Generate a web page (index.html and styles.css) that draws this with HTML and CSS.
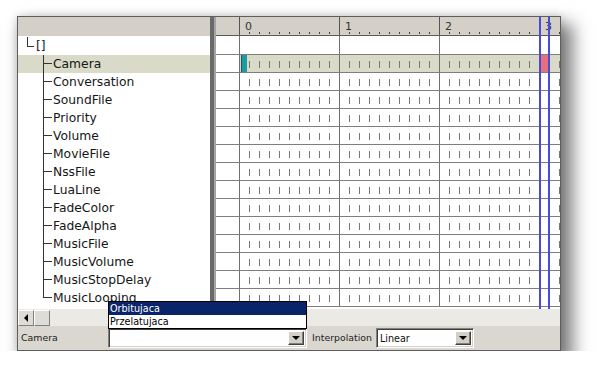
FILE: index.html
```html
<!DOCTYPE html>
<html>
<head>
<meta charset="utf-8">
<title>Timeline</title>
<link rel="stylesheet" href="styles.css">
</head>
<body>
<div class="window">
  <div class="main">
    <div class="tree">
      <div class="tree-head"></div>
      <div class="node root"><span>[]</span></div>
      <div class="node child sel"><span>Camera</span></div>
      <div class="node child"><span>Conversation</span></div>
      <div class="node child"><span>SoundFile</span></div>
      <div class="node child"><span>Priority</span></div>
      <div class="node child"><span>Volume</span></div>
      <div class="node child"><span>MovieFile</span></div>
      <div class="node child"><span>NssFile</span></div>
      <div class="node child"><span>LuaLine</span></div>
      <div class="node child"><span>FadeColor</span></div>
      <div class="node child"><span>FadeAlpha</span></div>
      <div class="node child"><span>MusicFile</span></div>
      <div class="node child"><span>MusicVolume</span></div>
      <div class="node child"><span>MusicStopDelay</span></div>
      <div class="node child last"><span>MusicLooping</span></div>
    </div>
    <div class="splitter"></div>
    <div class="timeline">
      <div class="tl-row tl-head">
        <div class="gutter"></div>
        <div class="sec"><span class="num">0</span></div>
        <div class="sec"><span class="num">1</span></div>
        <div class="sec"><span class="num">2</span></div>
        <div class="sec last"><span class="num">3</span></div>
      </div>
      <div class="tl-row first">
        <div class="gutter"></div><div class="sec"></div><div class="sec"></div><div class="sec"></div><div class="sec last"></div>
      </div>
      <div class="tl-row ticks sel">
        <div class="gutter"></div>
        <div class="sec"><i class="key teal"></i></div>
        <div class="sec"></div><div class="sec"></div>
        <div class="sec last"><i class="key pink"></i></div>
      </div>
      <div class="tl-row ticks"><div class="gutter"></div><div class="sec"></div><div class="sec"></div><div class="sec"></div><div class="sec last"></div></div>
      <div class="tl-row ticks"><div class="gutter"></div><div class="sec"></div><div class="sec"></div><div class="sec"></div><div class="sec last"></div></div>
      <div class="tl-row ticks"><div class="gutter"></div><div class="sec"></div><div class="sec"></div><div class="sec"></div><div class="sec last"></div></div>
      <div class="tl-row ticks"><div class="gutter"></div><div class="sec"></div><div class="sec"></div><div class="sec"></div><div class="sec last"></div></div>
      <div class="tl-row ticks"><div class="gutter"></div><div class="sec"></div><div class="sec"></div><div class="sec"></div><div class="sec last"></div></div>
      <div class="tl-row ticks"><div class="gutter"></div><div class="sec"></div><div class="sec"></div><div class="sec"></div><div class="sec last"></div></div>
      <div class="tl-row ticks"><div class="gutter"></div><div class="sec"></div><div class="sec"></div><div class="sec"></div><div class="sec last"></div></div>
      <div class="tl-row ticks"><div class="gutter"></div><div class="sec"></div><div class="sec"></div><div class="sec"></div><div class="sec last"></div></div>
      <div class="tl-row ticks"><div class="gutter"></div><div class="sec"></div><div class="sec"></div><div class="sec"></div><div class="sec last"></div></div>
      <div class="tl-row ticks"><div class="gutter"></div><div class="sec"></div><div class="sec"></div><div class="sec"></div><div class="sec last"></div></div>
      <div class="tl-row ticks"><div class="gutter"></div><div class="sec"></div><div class="sec"></div><div class="sec"></div><div class="sec last"></div></div>
      <div class="tl-row ticks"><div class="gutter"></div><div class="sec"></div><div class="sec"></div><div class="sec"></div><div class="sec last"></div></div>
      <div class="tl-row ticks"><div class="gutter"></div><div class="sec"></div><div class="sec"></div><div class="sec"></div><div class="sec last"></div></div>
      <div class="cursor c1"></div>
      <div class="cursor c2"></div>
    </div>
  </div>
  <div class="hscroll">
    <div class="sbtn"><i class="arrow-left"></i></div>
    <div class="sbtn thumb"></div>
  </div>
  <div class="footer">
    <div class="flabel">Camera</div>
    <div class="combo wide"><span class="ctext"></span><span class="cbtn"><i class="arrow-down"></i></span></div>
    <div class="flabel2">Interpolation</div>
    <div class="combo narrow"><span class="ctext">Linear</span><span class="cbtn"><i class="arrow-down"></i></span></div>
  </div>
  <div class="popup">
    <div class="item hl">Orbitujaca</div>
    <div class="item">Przelatujaca</div>
  </div>
</div>
</body>
</html>
```
FILE: styles.css
```css
* { box-sizing: border-box; margin: 0; padding: 0; }
html, body { background: #fff; }
body {
  padding: 16px 0 0 17px;
  font-family: "DejaVu Sans", Verdana, sans-serif;
  color: #1a1a1a;
}
.window {
  position: relative;
  width: 544px;
  height: 335px;
  border: 1px solid #5e5e5e;
  background: #fff;
  display: flex;
  flex-direction: column;
  box-shadow: 9px 11px 16px 3px rgba(0,0,0,.5), 0 0 8px rgba(0,0,0,.16);
}
.main { display: flex; height: 292px; overflow: hidden; background: #fff; }

/* tree */
.tree { width: 192px; flex: none; overflow: hidden; }
.tree-head { height: 19px; background: #d4d0c8; }
.node {
  position: relative;
  height: 18px;
  font-size: 12.3px;
  line-height: 18px;
  white-space: nowrap;
  padding-left: 35px;
  color: #161616;
}
.node.root { height: 19px; padding-left: 18px; }
.node.root::before {
  content: ""; position: absolute; left: 9px; top: 1px;
  width: 6px; height: 9px;
  border-left: 1px solid #333; border-bottom: 1px solid #333;
}
.node.child::before {
  content: ""; position: absolute; left: 25px; top: 0; bottom: 0;
  border-left: 1px solid #333;
}
.node.child.last::before { bottom: auto; height: 9px; }
.node.child::after {
  content: ""; position: absolute; left: 25px; top: 8px;
  width: 9px; border-top: 1px solid #333;
}
.node.sel { background: #d9dac8; }

.splitter {
  width: 6px; flex: none;
  background: #6a6a6a;
  border-right: 2px solid #a4a4a4;
}

/* timeline */
.timeline { position: relative; flex: 1; overflow: hidden; }
.tl-row { display: flex; height: 18px; border-bottom: 1px solid #7e7e7e; }
.tl-row.first { height: 19px; }
.tl-head { height: 19px; background: #d4d0c8; border-bottom-color: #5a5a5a; }
.gutter { width: 23px; flex: none; }
.sec {
  position: relative;
  width: 100px; flex: none;
  border-left: 1px solid #707070;
}
.sec.last { flex: 1; width: auto; }
.tl-head .sec {
  border-left-color: #555;
  background: repeating-linear-gradient(to right, transparent 0 9px, #444 9px 10px) 0 15px / 100% 2px no-repeat;
}
.num { display: block; padding-left: 5px; font-size: 11px; line-height: 19px; color: #333; }
.ticks .sec {
  background: repeating-linear-gradient(to right, transparent 0 9px, #777 9px 10px) 0 6px / 100% 7px no-repeat;
}
.ticks.sel .sec { background-color: #d9dac8; }
.key { position: absolute; top: 0; bottom: 0; }
.key.teal { left: 1px; width: 6px; background: #1f9aa3; border-left: 1px solid #0d5d66; }
.key.pink { left: 0; width: 8px; background: #e8707c; }
.cursor { position: absolute; top: 0; bottom: 0; width: 2px; background: #4a4ad8; }
.cursor.c1 { left: 323px; }
.cursor.c2 { left: 332px; }

/* scroll strip */
.hscroll { height: 17px; background: #ebeae5; display: flex; align-items: flex-end; }
.sbtn {
  width: 16px; height: 16px;
  background: #dedcd6;
  border: 1px solid; border-color: #fff #808080 #808080 #fff;
  display: flex; align-items: center; justify-content: center;
}
.arrow-left {
  width: 0; height: 0;
  border-top: 4px solid transparent; border-bottom: 4px solid transparent;
  border-right: 4px solid #000;
}

/* footer */
.footer {
  height: 24px;
  background: #dad7d0;
  display: flex;
  align-items: flex-start;
  padding-top: 1px;
  font-size: 9.4px;
  color: #222;
}
.flabel { width: 90px; padding-left: 3px; line-height: 21px; }
.flabel2 { margin-left: 5px; line-height: 21px; }
.combo {
  height: 20px;
  margin-top: 1px;
  background: #fff;
  border: 1px solid; border-color: #808080 #fff #fff #808080;
  box-shadow: inset 1px 1px #404040, inset -1px -1px #d4d0c8;
  display: flex; align-items: stretch;
  padding: 2px;
}
.combo.wide { width: 199px; }
.combo.narrow { width: 98px; margin-left: 4px; }
.ctext { flex: 1; font-size: 9.6px; line-height: 16px; padding-left: 1px; color: #111; }
.cbtn {
  width: 16px; flex: none;
  background: #d4d0c8;
  border: 1px solid; border-color: #fff #404040 #404040 #fff;
  box-shadow: inset -1px -1px #808080;
  display: flex; align-items: center; justify-content: center;
}
.arrow-down {
  width: 0; height: 0;
  border-left: 4px solid transparent; border-right: 4px solid transparent;
  border-top: 4px solid #000;
}

/* dropdown list */
.popup {
  position: absolute;
  left: 90px; top: 284px;
  width: 199px; height: 28px;
  border: 1px solid #000;
  background: #fff;
  font-size: 9.6px;
}
.item { height: 13px; line-height: 13px; padding-left: 1px; color: #000; white-space: nowrap; }
.item.hl { background: #0a246a; color: #fff; }
```
